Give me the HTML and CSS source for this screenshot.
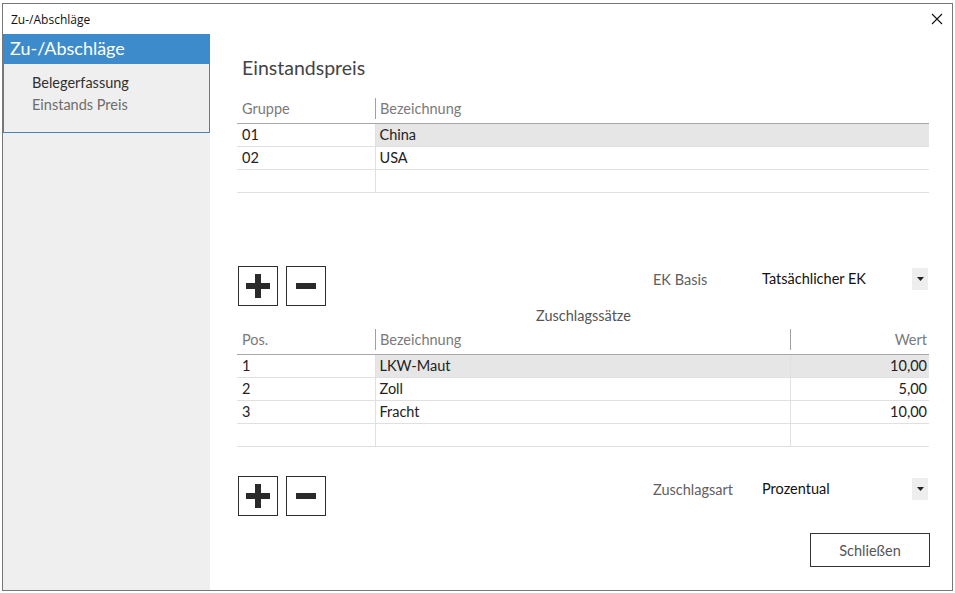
FILE: index.html
```html
<!DOCTYPE html>
<html lang="de">
<head>
<meta charset="utf-8">
<title>Zu-/Abschläge</title>
<link rel="stylesheet" href="styles.css">
</head>
<body>
<div class="window">
  <div class="titlebar">
    <span class="title">Zu-/Abschläge</span>
    <svg class="close" width="12" height="12" viewBox="0 0 12 12"><path d="M1 1L11 11M11 1L1 11" stroke="#111" stroke-width="1.1" fill="none"/></svg>
  </div>
  <div class="content">
    <aside class="sidebar">
      <div class="side-head">Zu-/Abschläge</div>
      <nav class="side-nav">
        <div class="nav-item active">Belegerfassung</div>
        <div class="nav-item">Einstands Preis</div>
      </nav>
    </aside>
    <main class="main">
      <h1 class="heading">Einstandspreis</h1>
      <table class="grid grid1">
        <thead>
          <tr><th class="c1"><span>Gruppe</span></th><th class="c2"><span class="sep">Bezeichnung</span></th></tr>
        </thead>
        <tbody>
          <tr><td class="c1">01</td><td class="c2 sel">China</td></tr>
          <tr><td class="c1">02</td><td class="c2">USA</td></tr>
          <tr><td class="c1"></td><td class="c2"></td></tr>
        </tbody>
      </table>

      <div class="toolrow row1">
        <div class="btns">
          <button class="icon-btn" type="button"><svg width="24" height="24" viewBox="0 0 24 24"><path d="M9 0h6v9h9v6h-9v9h-6v-9h-9v-6h9z" fill="#2a2a2a"/></svg></button>
          <button class="icon-btn" type="button"><svg width="20" height="6" viewBox="0 0 20 6"><rect width="20" height="6" fill="#2a2a2a"/></svg></button>
        </div>
        <div class="field">
          <span class="field-label">EK Basis</span>
          <span class="field-value">Tatsächlicher EK</span>
          <span class="dd"><svg width="7" height="4" viewBox="0 0 7 4"><path d="M0 0h7L3.5 4z" fill="#222"/></svg></span>
        </div>
      </div>

      <div class="caption">Zuschlagssätze</div>
      <table class="grid grid2">
        <thead>
          <tr><th class="p1"><span>Pos.</span></th><th class="p2"><span class="sep">Bezeichnung</span></th><th class="p3"><span class="sep right">Wert</span></th></tr>
        </thead>
        <tbody>
          <tr class="sel-row"><td class="p1">1</td><td class="p2 sel">LKW-Maut</td><td class="p3 sel">10,00</td></tr>
          <tr><td class="p1">2</td><td class="p2">Zoll</td><td class="p3">5,00</td></tr>
          <tr><td class="p1">3</td><td class="p2">Fracht</td><td class="p3">10,00</td></tr>
          <tr><td class="p1"></td><td class="p2"></td><td class="p3"></td></tr>
        </tbody>
      </table>

      <div class="toolrow row2">
        <div class="btns">
          <button class="icon-btn" type="button"><svg width="24" height="24" viewBox="0 0 24 24"><path d="M9 0h6v9h9v6h-9v9h-6v-9h-9v-6h9z" fill="#2a2a2a"/></svg></button>
          <button class="icon-btn" type="button"><svg width="20" height="6" viewBox="0 0 20 6"><rect width="20" height="6" fill="#2a2a2a"/></svg></button>
        </div>
        <div class="field">
          <span class="field-label">Zuschlagsart</span>
          <span class="field-value">Prozentual</span>
          <span class="dd"><svg width="7" height="4" viewBox="0 0 7 4"><path d="M0 0h7L3.5 4z" fill="#222"/></svg></span>
        </div>
      </div>

      <div class="footer">
        <button class="close-btn" type="button">Schließen</button>
      </div>
    </main>
  </div>
</div>
</body>
</html>
```
FILE: styles.css
```css
* { box-sizing: border-box; }
html, body { margin: 0; padding: 0; background: #fff; }
body { font-family: Lato, "Open Sans", sans-serif; color: #222; }

.window {
  margin: 3px 0 0 2px;
  width: 951px;
  height: 588px;
  border: 1px solid #777;
  display: flex;
  flex-direction: column;
  background: #fff;
}

.titlebar {
  height: 30px;
  flex: none;
  display: flex;
  align-items: center;
  justify-content: space-between;
  padding: 0 9px 0 8px;
}
.title { font-family: "Open Sans", "Noto Sans", sans-serif; font-size: 12px; color: #111; }
.close { display: block; }

.content { flex: 1; display: flex; min-height: 0; }

.sidebar { width: 207px; flex: none; background: #efefef; }
.side-head {
  height: 30px;
  background: #3d8bca;
  color: #fff;
  font-size: 18px;
  line-height: 28px;
  padding-left: 7px;
}
.side-nav {
  height: 69px;
  border: 1px solid #4a84b6;
  border-top: none;
  width: 207px;
  padding: 8px 0 0 28px;
}
.nav-item { font-size: 14.5px; line-height: 22px; color: #6d6d6d; }
.nav-item.active { color: #2f2f2f; }

.main { flex: 1; padding: 0 22px 0 27px; display: flex; flex-direction: column; }

.heading {
  margin: 21px 0 0 5px;
  font-size: 19.5px;
  font-weight: normal;
  color: #444;
  line-height: 26px;
}

.grid { border-collapse: collapse; width: 692px; table-layout: fixed; font-size: 14.5px; }
.grid1 { margin-top: 17px; }
.grid th { font-weight: normal; color: #7a7a7a; text-align: left; height: 24px; padding: 0 0 2px 0; border-bottom: 1px solid #a8a8a8; vertical-align: bottom; }
.grid th span { display: block; padding-left: 5px; line-height: 21px; height: 21px; margin-bottom: 2px; }
.grid th span.sep { border-left: 1px solid #a0a0a0; padding-left: 4px; }
.grid th span.right { text-align: right; padding-right: 2px; }
.grid td { height: 23px; padding: 0 0 0 5px; border-bottom: 1px solid #e0e0e0; line-height: 21px; color: #222; vertical-align: top; }
.grid td.c2, .grid td.p2, .grid td.p3 { border-left: 1px solid #e0e0e0; padding-left: 4px; }
.grid td.p3 { text-align: right; padding-right: 2px; }
.grid td.sel { background: #e6e6e6; }
.c1, .p1 { width: 138px; }
.p3 { width: 139px; }

.toolrow { display: flex; justify-content: space-between; align-items: flex-start; }
.row1 { margin-top: 73px; }
.row2 { margin-top: 29px; }
.btns { display: flex; gap: 8px; padding-left: 1px; }
.icon-btn {
  width: 40px; height: 40px; border: 1px solid #2d2d2d; background: #fff;
  display: flex; align-items: center; justify-content: center; padding: 0; margin: 0;
}
.field { display: flex; align-items: center; height: 22px; margin-top: 2px; }
.field-label { width: 109px; font-size: 14.5px; color: #606060; }
.field-value { width: 150px; font-size: 14.5px; color: #111; margin-top: -2px; }
.dd { width: 16px; height: 22px; background: #eeeeee; display: flex; align-items: center; justify-content: center; margin-right: 2px; }
.dd svg { display: block; }

.caption { text-align: center; font-size: 14.5px; color: #555; margin-top: 0; line-height: 20px; }
.grid2 { margin-top: 3px; }

.footer { display: flex; justify-content: flex-end; margin-top: 17px; }
.close-btn {
  width: 120px; height: 34px; border: 1px solid #333; background: #fff;
  font-family: Lato, "Open Sans", sans-serif; font-size: 14.5px; color: #555; padding: 0;
}
```
